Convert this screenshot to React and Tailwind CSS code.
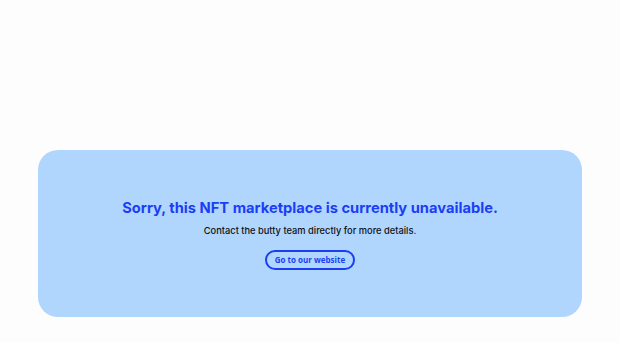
export default function App() {
  return (
    <div className="min-h-screen bg-[#fdfdfd] flex flex-col pt-[150px] px-[38px]">
      <div className="h-[167px] rounded-[20px] bg-[#b1d6fe] flex flex-col items-center pt-[48px]">
        <h1 className="text-[14.7px] leading-[20px] font-bold text-[#1b3ef5] [font-family:Inter,'Noto_Sans',sans-serif]">
          Sorry, this NFT marketplace is currently unavailable.
        </h1>
        <p className="mt-[6px] text-[9.3px] leading-[14px] font-medium text-[#111] [font-family:Inter,'Noto_Sans',sans-serif]">
          Contact the butty team directly for more details.
        </p>
        <a
          href="#"
          className="mt-[12px] h-[20px] w-[90px] rounded-full border-2 border-[#1b3ef5] flex items-center justify-center text-[8px] font-bold text-[#1b3ef5] [font-family:'Open_Sans',sans-serif]"
        >
          Go to our website
        </a>
      </div>
    </div>
  )
}
